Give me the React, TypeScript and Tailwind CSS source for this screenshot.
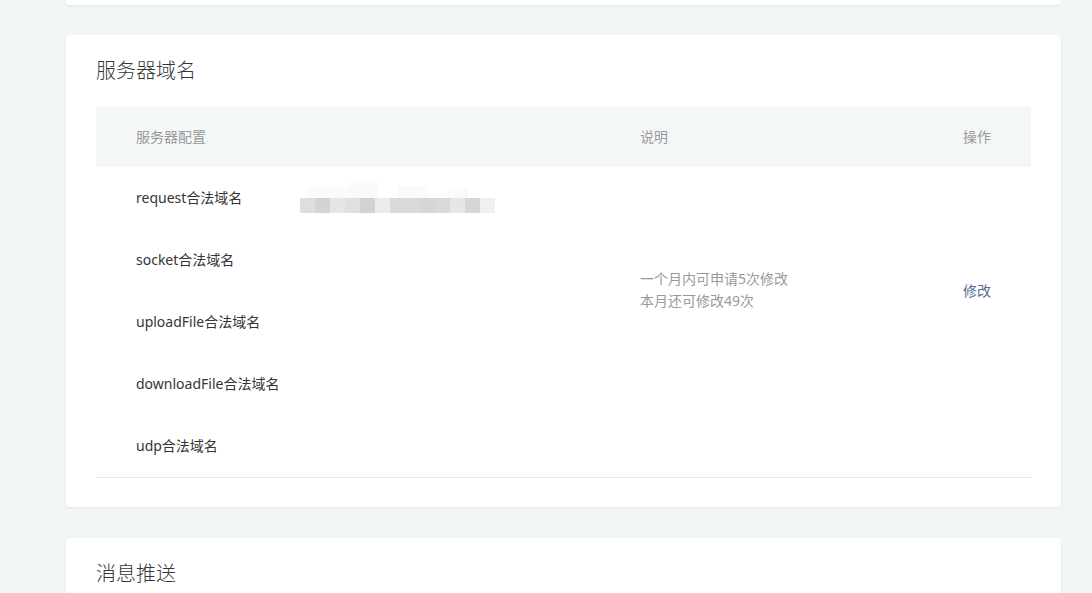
const rows = ["request合法域名", "socket合法域名", "uploadFile合法域名", "downloadFile合法域名", "udp合法域名"];

const mosaic = ["#dedede", "#d4d4d4", "#e6e6e6", "#e0e0e0", "#d2d2d2", "#ebebeb", "#dadada", "#dadada", "#d6d6d6", "#dadada", "#e6e6e6", "#d6d6d6", "#f0f0f0"];

function Blurred() {
  return (
    <div className="relative mt-[2px] h-[30px] w-[206px]">
      <div className="flex h-[15px] w-[200px] opacity-40">
        <div className="ml-[8px] mt-[4px] h-[11px] w-[40px] bg-[#f6f6f6]" />
        <div className="h-[15px] w-[30px] bg-[#f3f3f3]" />
        <div className="ml-[20px] mt-[3px] h-[12px] w-[30px] bg-[#f5f5f5]" />
        <div className="ml-[20px] mt-[6px] h-[9px] w-[20px] bg-[#f5f5f5]" />
      </div>
      <div className="flex h-[15px]">
        {mosaic.map((c, i) => (
          <div key={i} className="h-full w-[15px]" style={{ background: c }} />
        ))}
      </div>
    </div>
  );
}

export default function App() {
  return (
    <div
      className="min-h-[593px] bg-[#f3f6f7] pl-[66px] text-[14px]"
      style={{ fontFamily: '"Noto Sans", "Noto Sans CJK SC", sans-serif' }}
    >
      <div className="w-[995px]">
        {/* end of previous card */}
        <div className="h-[5px] rounded-b-[4px] bg-white shadow-[0_1px_3px_rgba(0,0,0,0.08)]" />

        {/* 服务器域名 */}
        <div className="mt-[30px] rounded-[4px] bg-white px-[30px] pb-[29px] pt-[22px] shadow-[0_1px_3px_rgba(0,0,0,0.08)]">
          <h2 className="mb-[22px] h-[28px] text-[20px] font-light leading-[28px] text-[#353535]">服务器域名</h2>

          <div className="border-b border-[#e7e7e7]">
            <div className="grid h-[60px] grid-cols-[504px_323px_108px] items-center bg-[#f4f7f8] pb-[2px] text-[#9a9a9a]">
              <div className="pl-[40px]">服务器配置</div>
              <div className="pl-[40px]">说明</div>
              <div className="pl-[40px]">操作</div>
            </div>

            <div className="grid grid-cols-[504px_323px_108px] grid-rows-[repeat(5,62px)]">
              {rows.map((r, i) => (
                <div
                  key={r}
                  className="col-start-1 flex items-center pb-[2px] pl-[40px] text-[#353535]"
                  style={{ gridRowStart: i + 1 }}
                >
                  <span className="w-[164px]">{r}</span>
                  {i === 0 && <Blurred />}
                </div>
              ))}
              <div className="col-start-2 row-span-4 row-start-1 flex flex-col justify-center pb-[2px] pl-[40px] text-[14px] leading-[22px] text-[#9a9a9a]">
                <p>一个月内可申请5次修改</p>
                <p>本月还可修改49次</p>
              </div>
              <div className="col-start-3 row-span-4 row-start-1 flex items-center pb-[2px] pl-[40px]">
                <a className="cursor-pointer text-[#576b95]">修改</a>
              </div>
            </div>
          </div>
        </div>

        {/* 消息推送 */}
        <div className="mt-[31px] h-[80px] rounded-t-[4px] bg-white px-[30px] pt-[22px] shadow-[0_1px_3px_rgba(0,0,0,0.08)]">
          <h2 className="h-[28px] text-[20px] font-light leading-[28px] text-[#353535]">消息推送</h2>
        </div>
      </div>
    </div>
  );
}
